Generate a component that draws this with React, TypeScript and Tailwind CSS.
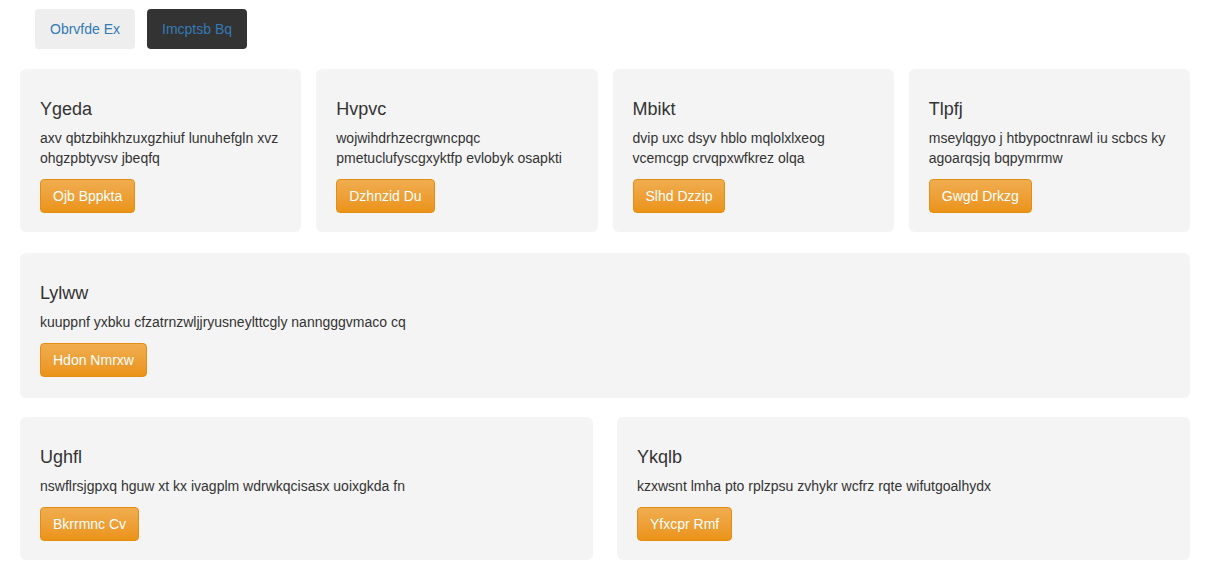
import React from 'react';

type Card = { title: string; text: string; action: string };

const topCards: Card[] = [
  { title: 'Ygeda', text: 'axv qbtzbihkhzuxgzhiuf lunuhefgln xvz ohgzpbtyvsv jbeqfq', action: 'Ojb Bppkta' },
  { title: 'Hvpvc', text: 'wojwihdrhzecrgwncpqc pmetuclufyscgxyktfp evlobyk osapkti', action: 'Dzhnzid Du' },
  { title: 'Mbikt', text: 'dvip uxc dsyv hblo mqlolxlxeog vcemcgp crvqpxwfkrez olqa', action: 'Slhd Dzzip' },
  { title: 'Tlpfj', text: 'mseylqgyo j htbypoctnrawl iu scbcs ky agoarqsjq bqpymrmw', action: 'Gwgd Drkzg' },
];

const wideCard: Card = {
  title: 'Lylww',
  text: 'kuuppnf yxbku cfzatrnzwljjryusneylttcgly nanngggvmaco cq',
  action: 'Hdon Nmrxw',
};

const halfCards: Card[] = [
  { title: 'Ughfl', text: 'nswflrsjgpxq hguw xt kx ivagplm wdrwkqcisasx uoixgkda fn', action: 'Bkrrmnc Cv' },
  { title: 'Ykqlb', text: 'kzxwsnt lmha pto rplzpsu zvhykr wcfrz rqte wifutgoalhydx', action: 'Yfxcpr Rmf' },
];

const Panel: React.FC<{ card: Card; extra?: string }> = ({ card, extra = 'pb-[19px]' }) => (
  <div className={`bg-[#f4f4f4] rounded-md px-5 pt-[30px] ${extra}`}>
    <h3 className="text-[18px] leading-[20px] text-[#333]">{card.title}</h3>
    <p className="mt-[9px] text-[14px] leading-[20px] text-[#333]">{card.text}</p>
    <button className="mt-[11px] h-[34px] px-3 text-[14px] text-white rounded border border-[#e38d13] bg-gradient-to-b from-[#f0ad4e] to-[#eb9316]">
      {card.action}
    </button>
  </div>
);

export default function App() {
  return (
    <div className="min-h-screen bg-white font-['Liberation_Sans',Arial,sans-serif]">
      <div className="w-[1170px] ml-5 pt-[9px]">
        <div className="flex gap-3 pl-[15px]">
          <button className="h-10 px-[15px] rounded bg-[#eeeeee] text-[14px] text-[#337ab7]">Obrvfde Ex</button>
          <button className="h-10 px-[15px] rounded bg-[#333333] text-[14px] text-[#337ab7]">Imcptsb Bq</button>
        </div>

        <div className="mt-5 grid grid-cols-4 gap-[15px]">
          {topCards.map((c) => (
            <Panel key={c.title} card={c} />
          ))}
        </div>

        <div className="mt-[21px]">
          <Panel card={wideCard} extra="pb-[21px]" />
        </div>

        <div className="mt-[19px] grid grid-cols-2 gap-6">
          {halfCards.map((c) => (
            <Panel key={c.title} card={c} />
          ))}
        </div>
      </div>
    </div>
  );
}
